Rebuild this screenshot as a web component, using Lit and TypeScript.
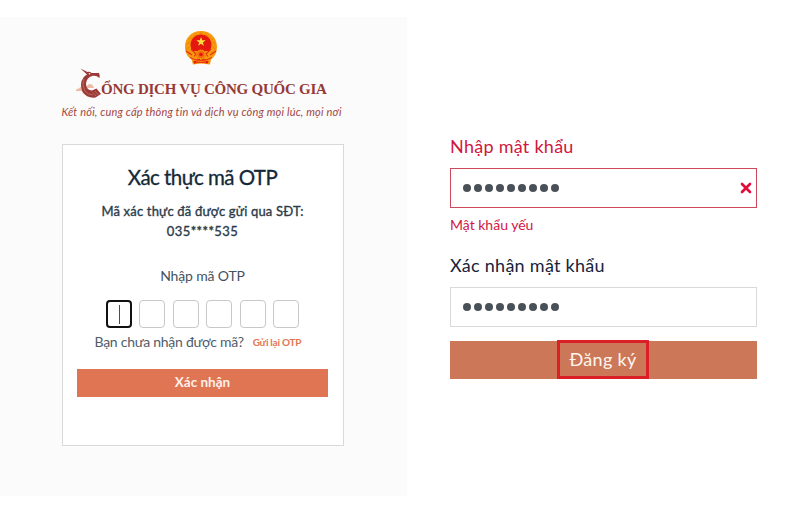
import { LitElement, css, html, svg } from "lit";
import { customElement, property } from "lit/decorators.js";

const starPoints = (cx: number, cy: number, r: number) =>
  Array.from({ length: 10 }, (_, i) => {
    const radius = i % 2 ? r * 0.4 : r;
    const a = (Math.PI / 5) * i - Math.PI / 2;
    return `${(cx + radius * Math.cos(a)).toFixed(2)},${(cy + radius * Math.sin(a)).toFixed(2)}`;
  }).join(" ");

@customElement("national-emblem")
export class NationalEmblem extends LitElement {
  // rice ears on one side, mirrored for the other
  private _ears = () =>
    [0, 1, 2, 3, 4, 5].map((i) => {
      const a = 2.65 + i * 0.4;
      const x = 16 + 13.2 * Math.cos(a);
      const y = 16 + 13.2 * Math.sin(a);
      return svg`<path d="M${x - 1.6} ${y + 1.2}L${x + 1.4} ${y - 1.2}" />`;
    });

  render() {
    return html`
      <svg viewBox="0 0 32 34" width="32" height="34">
        <path
          d="M16 0C26 0 32 7 32 16C32 21 30 25.5 26 28.5L25 33.5L16 32.5L8 33.5L6.5 28.5C2 25.5 0 21 0 16C0 7 6 0 16 0Z"
          fill="#f79a0e"
        />
        <path d="M16 3.500C22 3.500 26.500 8 26.500 14Q26.500 18 24 20H8Q5.500 18 5.500 14C5.500 8 10 3.500 16 3.500Z" fill="#e5180f" />
        <polygon points="${starPoints(16, 10.8, 4.9)}" fill="#ffe040" />
        <g stroke="#f0740c" stroke-width="0.8" fill="none">
          ${this._ears()}
          <g transform="matrix(-1 0 0 1 32 0)">${this._ears()}</g>
        </g>
        <path
          d="M6 18L11 23L9 25.5M26 18L21 23L23 25.5M1 20L7 24M31 20L25 24"
          fill="none"
          stroke="#e5300f"
          stroke-width="1.1"
        />
        <circle cx="16" cy="23.5" r="5" fill="#f26a0a" />
        <circle cx="16" cy="23.5" r="4.1" fill="none" stroke="#ffb413" stroke-dasharray="1.2 0.8" />
        <circle cx="16" cy="23.5" r="1.8" fill="#e5180f" />
        <path d="M5 26.5Q10 30 15 28.5M27 26.5Q22 30 17 28.5" fill="none" stroke="#e5300f" stroke-width="1" />
        <path d="M8.5 30.2Q16 28.5 23.5 30.2L23 32.5Q16 31 9 32.5Z" fill="#e5180f" />
        <path d="M11 31Q16 30 21 31" fill="none" stroke="#ffb413" stroke-width="0.7" />
      </svg>
    `;
  }

  static styles = css`
    :host {
      display: block;
      height: 34px;
    }
    svg {
      display: block;
    }
  `;
}

@customElement("portal-logo")
export class PortalLogo extends LitElement {
  render() {
    return html`
      <svg viewBox="0 0 26 30" width="26" height="30">
        <g fill="#eeb9a5">
          <path d="M0 22Q1 20 3 20.5Q4 18 6.5 19.5L8 23H1Q-1 23 0 22Z" />
          <path d="M11 18Q13 15 15 16.5Q17 16 17 18.5Q19 19.5 17 20H11Z" />
        </g>
        <path
          d="M4.5 0.5L11.5 4Q13.5 3 15.500 5L23 5Q24 7 23.5 10Q20.5 7.3 17 7.8Q10.5 9 10 16Q10.5 22 16 22.5L20.5 20.5L25 26L19.5 29.5Q11 30.5 6.5 24Q3 15 7.5 9.5Q9 7.5 11 6.5Z"
          fill="#9c3a37"
        />
        <path d="M7.8 11Q5.5 17 9 23Q12 27 17 27M17 24.5L20 28M19 23L22.5 27" fill="none" stroke="#c77b70" stroke-width="0.7" />
        <circle cx="13.5" cy="5.7" r="0.8" fill="#fff" />
      </svg>
      <span class="name">ỔNG DỊCH VỤ CÔNG QUỐC GIA</span>
    `;
  }

  static styles = css`
    :host {
      display: flex;
      align-items: flex-start;
      height: 30px;
    }
    svg {
      flex: none;
    }
    .name {
      font: bold 15px/20px "Liberation Serif", serif;
      letter-spacing: -0.25px;
      color: #963a37;
      padding-top: 11px;
      margin-left: -1px;
      white-space: nowrap;
    }
  `;
}

@customElement("password-field")
export class PasswordField extends LitElement {
  @property()
  label = "";

  @property()
  error = "";

  @property({ type: Number })
  length = 9;

  render() {
    return html`
      <div class="field ${this.error ? "invalid" : ""}">
        <div class="label">${this.label}</div>
        <div class="input">
          <div class="dots">
            ${Array.from({ length: this.length }, () => html`<i class="dot"></i>`)}
          </div>
          ${this.error
            ? html`<svg viewBox="0 0 12 12" width="12" height="12">
                <path d="M2 2L10 10M10 2L2 10" />
              </svg>`
            : ""}
        </div>
        ${this.error ? html`<div class="error">${this.error}</div>` : ""}
      </div>
    `;
  }

  static styles = css`
    :host {
      display: block;
    }
    .label {
      font-size: 18px;
      line-height: 23px;
      height: 33px;
      letter-spacing: 0.27px;
      color: #17233a;
      white-space: nowrap;
    }
    .input {
      box-sizing: border-box;
      height: 40px;
      border: 1px solid #d9d9d9;
      background: #fff;
      display: flex;
      align-items: center;
      justify-content: space-between;
      padding: 0 4px 0 11.5px;
    }
    .dots {
      display: flex;
      gap: 3px;
    }
    .dot {
      width: 8px;
      height: 8px;
      border-radius: 50%;
      background: #495057;
    }
    path {
      fill: none;
      stroke: #e30b3c;
      stroke-width: 2.6;
      stroke-linecap: round;
    }
    .invalid .label,
    .error {
      color: #d0163f;
    }
    .invalid .input {
      border-color: #d0485c;
    }
    .error {
      font-size: 14px;
      line-height: 20px;
      padding-top: 7px;
    }
  `;
}

@customElement("app-root")
export class AppRoot extends LitElement {
  render() {
    return html`
      <section class="otp">
        <national-emblem></national-emblem>
        <portal-logo></portal-logo>
        <div class="slogan">
          Kết nối, cung cấp thông tin và dịch vụ công mọi lúc, mọi nơi
        </div>
        <div class="card">
          <div class="title">Xác thực mã OTP</div>
          <div class="sent">
            <div>Mã xác thực đã được gửi qua SĐT:</div>
            <div class="phone">035****535</div>
          </div>
          <div class="prompt">Nhập mã OTP</div>
          <div class="cells">
            ${[0, 1, 2, 3, 4, 5].map(
              (i) => html`<div class="cell ${i === 0 ? "active" : ""}"></div>`
            )}
          </div>
          <div class="resend">
            <span class="question">Bạn chưa nhận được mã?</span>
            <span class="link">Gửi lại OTP</span>
          </div>
          <div class="confirm">Xác nhận</div>
        </div>
      </section>
      <section class="register">
        <password-field class="first" label="Nhập mật khẩu" error="Mật khẩu yếu"></password-field>
        <password-field label="Xác nhận mật khẩu"></password-field>
        <div class="submit"><div class="mark">Đăng ký</div></div>
      </section>
    `;
  }

  static styles = css`
    :host {
      display: flex;
      width: 800px;
      height: 506px;
      overflow: hidden;
      background: #fff;
      font-family: Lato, "Open Sans", sans-serif;
    }
    .otp {
      box-sizing: border-box;
      width: 407px;
      height: 479px;
      margin-top: 17px;
      padding: 14px 2px 0 0;
      background: #fbfbfb;
      display: flex;
      flex-direction: column;
      align-items: center;
    }
    national-emblem {
      margin-right: 3px;
    }
    portal-logo {
      margin-top: 3px;
      width: 253px;
    }
    .slogan {
      font-size: 11px;
      line-height: 16px;
      font-style: italic;
      letter-spacing: 0.19px;
      color: #a34643;
      margin-top: 6px;
      margin-right: 2px;
      white-space: nowrap;
    }
    .card {
      box-sizing: border-box;
      width: 282px;
      height: 302px;
      margin-top: 24px;
      border: 1px solid #d8dada;
      background: #fff;
      display: flex;
      flex-direction: column;
      align-items: center;
      white-space: nowrap;
    }
    .title {
      font-size: 20.5px;
      line-height: 28px;
      letter-spacing: -0.55px;
      color: #14283a;
      -webkit-text-stroke: 0.3px #14283a;
      margin-top: 18px;
    }
    .sent {
      margin-top: 10px;
      font-size: 13px;
      line-height: 20px;
      letter-spacing: 0.18px;
      color: #2b3c4a;
      -webkit-text-stroke: 0.35px #2b3c4a;
      text-align: center;
    }
    .phone {
      letter-spacing: 0.4px;
    }
    .prompt {
      margin-top: 25px;
      font-size: 14px;
      line-height: 20px;
      letter-spacing: -0.15px;
      color: #44525f;
    }
    .cells {
      margin-top: 14px;
      display: flex;
      gap: 7.4px;
    }
    .cell {
      box-sizing: border-box;
      width: 26px;
      height: 28px;
      border: 1.5px solid #c8c8c8;
      border-radius: 4px;
      display: flex;
      align-items: center;
      justify-content: center;
    }
    .active {
      border: 2px solid #111;
    }
    .active::after {
      content: "";
      width: 1px;
      height: 19px;
      background: #3f4f5e;
    }
    .resend {
      margin-top: 4px;
      display: flex;
      gap: 9px;
      line-height: 20px;
      align-self: flex-start;
      padding-left: 32px;
    }
    .question {
      font-size: 14px;
      letter-spacing: -0.27px;
      color: #4f5d69;
    }
    .link {
      font-size: 10px;
      font-weight: bold;
      letter-spacing: -0.25px;
      color: #e27452;
    }
    .confirm {
      width: 251px;
      height: 28px;
      margin-top: 17px;
      background: #e07553;
      color: #fdf0ea;
      font-size: 13.5px;
      line-height: 27px;
      font-weight: bold;
      letter-spacing: 0;
      text-align: center;
    }
    .register {
      width: 307px;
      margin-left: 43px;
      padding-top: 135px;
    }
    .first {
      height: 119px;
    }
    .submit {
      height: 38px;
      margin-top: 14px;
      background: #cc7858;
      display: flex;
      justify-content: center;
    }
    .mark {
      box-sizing: border-box;
      width: 92px;
      height: 39px;
      margin: -1px 1px 0 0;
      border: 3px solid #db1f27;
      color: #fff5ef;
      font-size: 18px;
      line-height: 32px;
      letter-spacing: 0.3px;
      text-align: center;
    }
  `;
}
